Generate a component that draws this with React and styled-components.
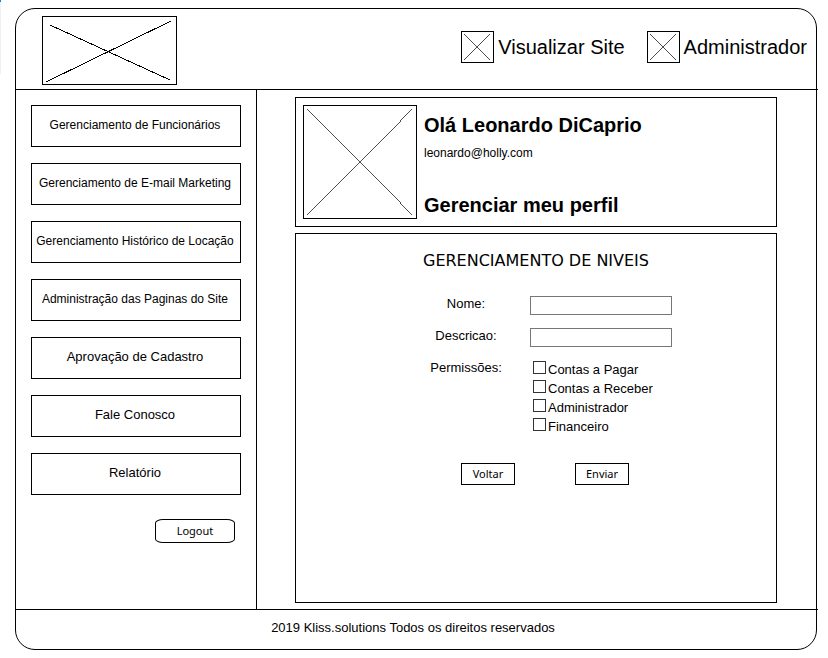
import React from "react";
import styled, { createGlobalStyle } from "styled-components";

const GlobalStyle = createGlobalStyle`
  *, *::before, *::after { box-sizing: border-box; }
  body {
    margin: 0;
    background: #fff;
    color: #000;
    font-family: "Liberation Sans", Arial, sans-serif;
    font-size: 13px;
    line-height: 16px;
  }
  button, input { font: inherit; color: inherit; margin: 0; }
`;

const EdgeMark = styled.div`
  position: absolute;
  left: 0;
  top: 0;
  width: 1px;
  height: 74px;
  background: #f0f0f0;
  border-top: 2px solid #0a84ff;
`;

const Frame = styled.div`
  display: flex;
  flex-direction: column;
  min-height: calc(100vh - 16px);
  margin: 8px 11px 8px 15px;
  border: 1px solid #000;
  border-radius: 20px;
`;

const Header = styled.header`
  display: flex;
  align-items: center;
  justify-content: space-between;
  min-height: 81px;
  margin-right: -2px;
  padding: 7px 11px 4px 26px;
  border-bottom: 1px solid #000;
`;

const HeaderNav = styled.nav`
  display: flex;
  gap: 22px;
  padding-bottom: 8px;
`;

const HeaderLink = styled.a`
  display: flex;
  align-items: center;
  gap: 4px;
  color: inherit;
  text-decoration: none;
  font-size: 20px;
  line-height: 24px;
`;

const Drawing = styled.svg`
  display: block;
  flex: none;
  width: ${(p) => p.$w}px;
  height: ${(p) => p.$h}px;
  border: 1px solid #000;
  stroke: #000;
  shape-rendering: crispEdges;
`;

const Body = styled.div`
  display: flex;
  flex: 1;
`;

const Sidebar = styled.aside`
  display: flex;
  flex-direction: column;
  flex: none;
  width: 241px;
  padding: 15px;
  border-right: 1px solid #000;
`;

const Menu = styled.nav`
  display: grid;
  gap: 16px;
`;

const MenuLink = styled.a`
  display: flex;
  align-items: center;
  justify-content: center;
  height: 42px;
  padding: 0 2px 2px 0;
  border: 1px solid #000;
  color: inherit;
  text-decoration: none;
  white-space: nowrap;
  font-size: ${(p) => (p.$long ? 12 : 13)}px;
`;

const Button = styled.button`
  width: 54px;
  height: 22px;
  padding: 0;
  border: 1px solid #000;
  background: #fff;
  font-family: "Noto Sans", sans-serif;
  font-size: 11px;
  line-height: 14px;
  cursor: pointer;
`;

const LogoutButton = styled(Button)`
  align-self: flex-end;
  width: 80px;
  height: 24px;
  margin: 24px 6px 0 0;
  border-radius: 8px / 4px;
`;

const Main = styled.main`
  display: flex;
  flex-direction: column;
  flex: 1;
  gap: 6px;
  padding: 7px 39px 6px 38px;
`;

const Profile = styled.section`
  display: flex;
  gap: 7px;
  padding: 7px;
  border: 1px solid #000;
`;

const ProfileText = styled.div`
  display: flex;
  flex-direction: column;
  padding-top: 8px;
`;

const Heading = styled.h1`
  margin: 0;
  font-size: 20px;
  line-height: 24px;
`;

const Email = styled.p`
  margin: 8px 0 32px;
  font-size: 12px;
`;

const ProfileLink = styled.a`
  color: inherit;
  text-decoration: none;
  font-size: 20px;
  font-weight: bold;
  line-height: 24px;
`;

const Panel = styled.section`
  flex: 1;
  padding: 16px;
  border: 1px solid #000;
`;

const Title = styled.h2`
  margin: 0 0 24px;
  font-family: "DejaVu Sans", sans-serif;
  font-size: 16px;
  font-weight: normal;
  line-height: 22px;
  text-align: center;
`;

const Fields = styled.div`
  display: grid;
  grid-template-columns: 76px 142px;
  column-gap: 26px;
  row-gap: 13px;
  justify-content: center;
  padding-left: 28px;
`;

const Label = styled.label`
  text-align: center;
`;

const TextInput = styled.input`
  width: 100%;
  height: 19px;
  padding: 0 4px;
  border: 1px solid #767676;
  background: #fff;
`;

const Options = styled.div`
  padding: 0 0 0 3px;
`;

const Option = styled.label`
  display: flex;
  gap: 2px;
  height: 19px;
  line-height: 20px;
`;

const Checkbox = styled.input`
  appearance: none;
  flex: none;
  width: 13px;
  height: 13px;
  margin-top: 1px;
  border: 1px solid #333;
  background: #fff;
  &:checked { background: #333; }
`;

const Actions = styled.div`
  display: flex;
  justify-content: center;
  gap: 60px;
  margin-top: 27px;
  padding-left: 18px;
`;

const Footer = styled.footer`
  min-height: 40px;
  margin-right: -2px;
  padding: 10px 8px 0;
  border-top: 1px solid #000;
  text-align: center;
`;

const FooterText = styled.p`
  margin: 0;
  padding-right: 8px;
`;

function Placeholder({ w, h, inset = 2, label }) {
  const left = inset + 0.4;
  const right = w - 2 - inset - 0.6;
  const bottom = h - 2 - inset;
  return (
    <Drawing $w={w} $h={h} viewBox={`0 0 ${w - 2} ${h - 2}`} role="img" aria-label={label}>
      <path strokeWidth="0.7" d={`M${left} ${inset}L${right} ${bottom}M${right} ${inset}L${left} ${bottom}`} />
    </Drawing>
  );
}

function Logo() {
  return (
    <Drawing $w={135} $h={69} viewBox="0 0 133 67" role="img" aria-label="Logo">
      <path d="M7 8L127 63M128 4L3 65" />
    </Drawing>
  );
}

const menu = [
  { text: "Gerenciamento de Funcionários", long: true },
  { text: "Gerenciamento de E-mail Marketing", long: true },
  { text: "Gerenciamento Histórico de Locação", long: true },
  { text: "Administração das Paginas do Site", long: true },
  { text: "Aprovação de Cadastro" },
  { text: "Fale Conosco" },
  { text: "Relatório" },
];

const permissions = ["Contas a Pagar", "Contas a Receber", "Administrador", "Financeiro"];

export default function App() {
  return (
    <>
      <GlobalStyle />
      <EdgeMark />
      <Frame>
        <Header>
          <Logo />
          <HeaderNav>
            <HeaderLink href="#site">
              <Placeholder w={33} h={32} label="Site" />
              Visualizar Site
            </HeaderLink>
            <HeaderLink href="#admin">
              <Placeholder w={33} h={32} label="Conta" />
              Administrador
            </HeaderLink>
          </HeaderNav>
        </Header>
        <Body>
          <Sidebar>
            <Menu>
              {menu.map((item) => (
                <MenuLink key={item.text} href="#menu" $long={item.long}>
                  {item.text}
                </MenuLink>
              ))}
            </Menu>
            <LogoutButton type="button">Logout</LogoutButton>
          </Sidebar>
          <Main>
            <Profile>
              <Placeholder w={114} h={114} inset={3} label="Foto do perfil" />
              <ProfileText>
                <Heading>Olá Leonardo DiCaprio</Heading>
                <Email>leonardo@holly.com</Email>
                <ProfileLink href="#perfil">Gerenciar meu perfil</ProfileLink>
              </ProfileText>
            </Profile>
            <Panel>
              <Title>GERENCIAMENTO DE NIVEIS</Title>
              <form onSubmit={(e) => e.preventDefault()}>
                <Fields>
                  <Label htmlFor="nome">Nome:</Label>
                  <TextInput id="nome" type="text" />
                  <Label htmlFor="descricao">Descricao:</Label>
                  <TextInput id="descricao" type="text" />
                  <Label as="span" id="permissoes">Permissões:</Label>
                  <Options role="group" aria-labelledby="permissoes">
                    {permissions.map((name) => (
                      <Option key={name}>
                        <Checkbox type="checkbox" />
                        {name}
                      </Option>
                    ))}
                  </Options>
                </Fields>
                <Actions>
                  <Button type="button">Voltar</Button>
                  <Button type="submit">Enviar</Button>
                </Actions>
              </form>
            </Panel>
          </Main>
        </Body>
        <Footer>
          <FooterText>2019 Kliss.solutions Todos os direitos reservados</FooterText>
        </Footer>
      </Frame>
    </>
  );
}
